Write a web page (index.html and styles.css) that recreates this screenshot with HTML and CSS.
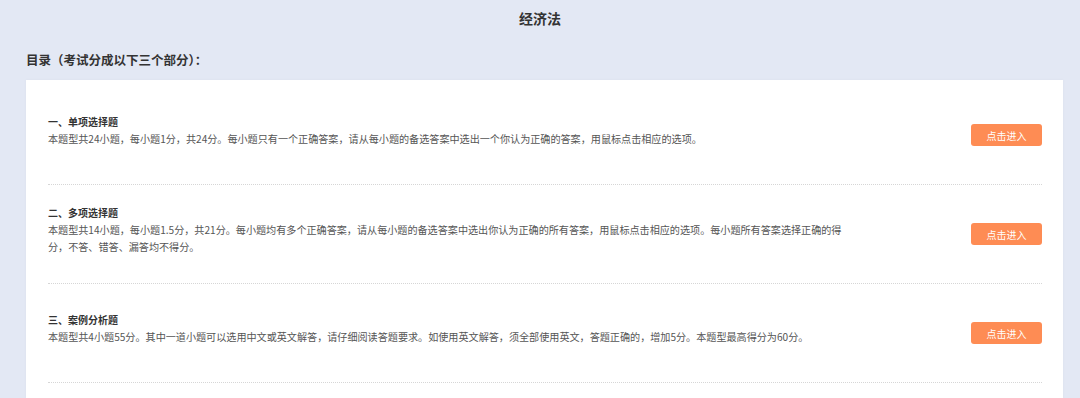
FILE: index.html
```html
<!DOCTYPE html>
<html lang="zh-CN">
 <head>
  <meta charset="UTF-8">
  <title>经济法</title>
  <meta name="viewport" content="width=device-width, initial-scale=1.0">
  <link rel="stylesheet" href="styles.css">
 </head>
 <body>
  <h1 class="page-title">经济法</h1>
  <h2 class="toc-title">目录（考试分成以下三个部分）：</h2>
  <div class="card">
   <div class="part">
    <div class="part-text">
     <h3>一、单项选择题</h3>
     <p>本题型共24小题，每小题1分，共24分。每小题只有一个正确答案，请从每小题的备选答案中选出一个你认为正确的答案，用鼠标点击相应的选项。</p>
    </div>
    <button class="enter">点击进入</button>
   </div>
   <div class="part">
    <div class="part-text">
     <h3>二、多项选择题</h3>
     <p>本题型共14小题，每小题1.5分，共21分。每小题均有多个正确答案，请从每小题的备选答案中选出你认为正确的所有答案，用鼠标点击相应的选项。每小题所有答案选择正确的得分，不答、错答、漏答均不得分。</p>
    </div>
    <button class="enter">点击进入</button>
   </div>
   <div class="part">
    <div class="part-text">
     <h3>三、案例分析题</h3>
     <p>本题型共4小题55分。其中一道小题可以选用中文或英文解答，请仔细阅读答题要求。如使用英文解答，须全部使用英文，答题正确的，增加5分。本题型最高得分为60分。</p>
    </div>
    <button class="enter">点击进入</button>
   </div>
  </div>
 </body>
</html>
```

FILE: styles.css
```css
body {
  margin: 0;
  background: #e3e8f4;
  font-family: "Noto Sans CJK SC", "Noto Sans", sans-serif;
  color: #333;
}
.page-title {
  margin: 0;
  padding: 10px 0;
  font-size: 14px;
  line-height: 16px;
  font-weight: bold;
  text-align: center;
}
.toc-title {
  margin: 16px 26px 0;
  font-size: 12.5px;
  line-height: 16px;
  font-weight: bold;
}
.card {
  margin: 12px 17px 0 26px;
  padding: 6px 21px 15px 22px;
  background: #fff;
  box-shadow: 0 0 3px rgba(0,0,0,0.04);
}
.part {
  height: 98px;
  display: flex;
  align-items: center;
  justify-content: space-between;
  border-bottom: 1px dotted #d6d6d6;
}
.part-text {
  width: 796px;
  margin-bottom: 10px;
}
.part-text h3 {
  margin: 0;
  font-size: 10px;
  line-height: 17px;
  font-weight: bold;
  color: #333;
}
.part-text p {
  margin: 0;
  font-size: 10.1px;
  line-height: 17px;
  color: #555;
}
.enter {
  width: 71px;
  height: 22px;
  padding: 0;
  border: none;
  border-radius: 3px;
  background: #fe8c54;
  color: #fff;
  font-family: inherit;
  font-size: 10px;
  cursor: pointer;
}
```
